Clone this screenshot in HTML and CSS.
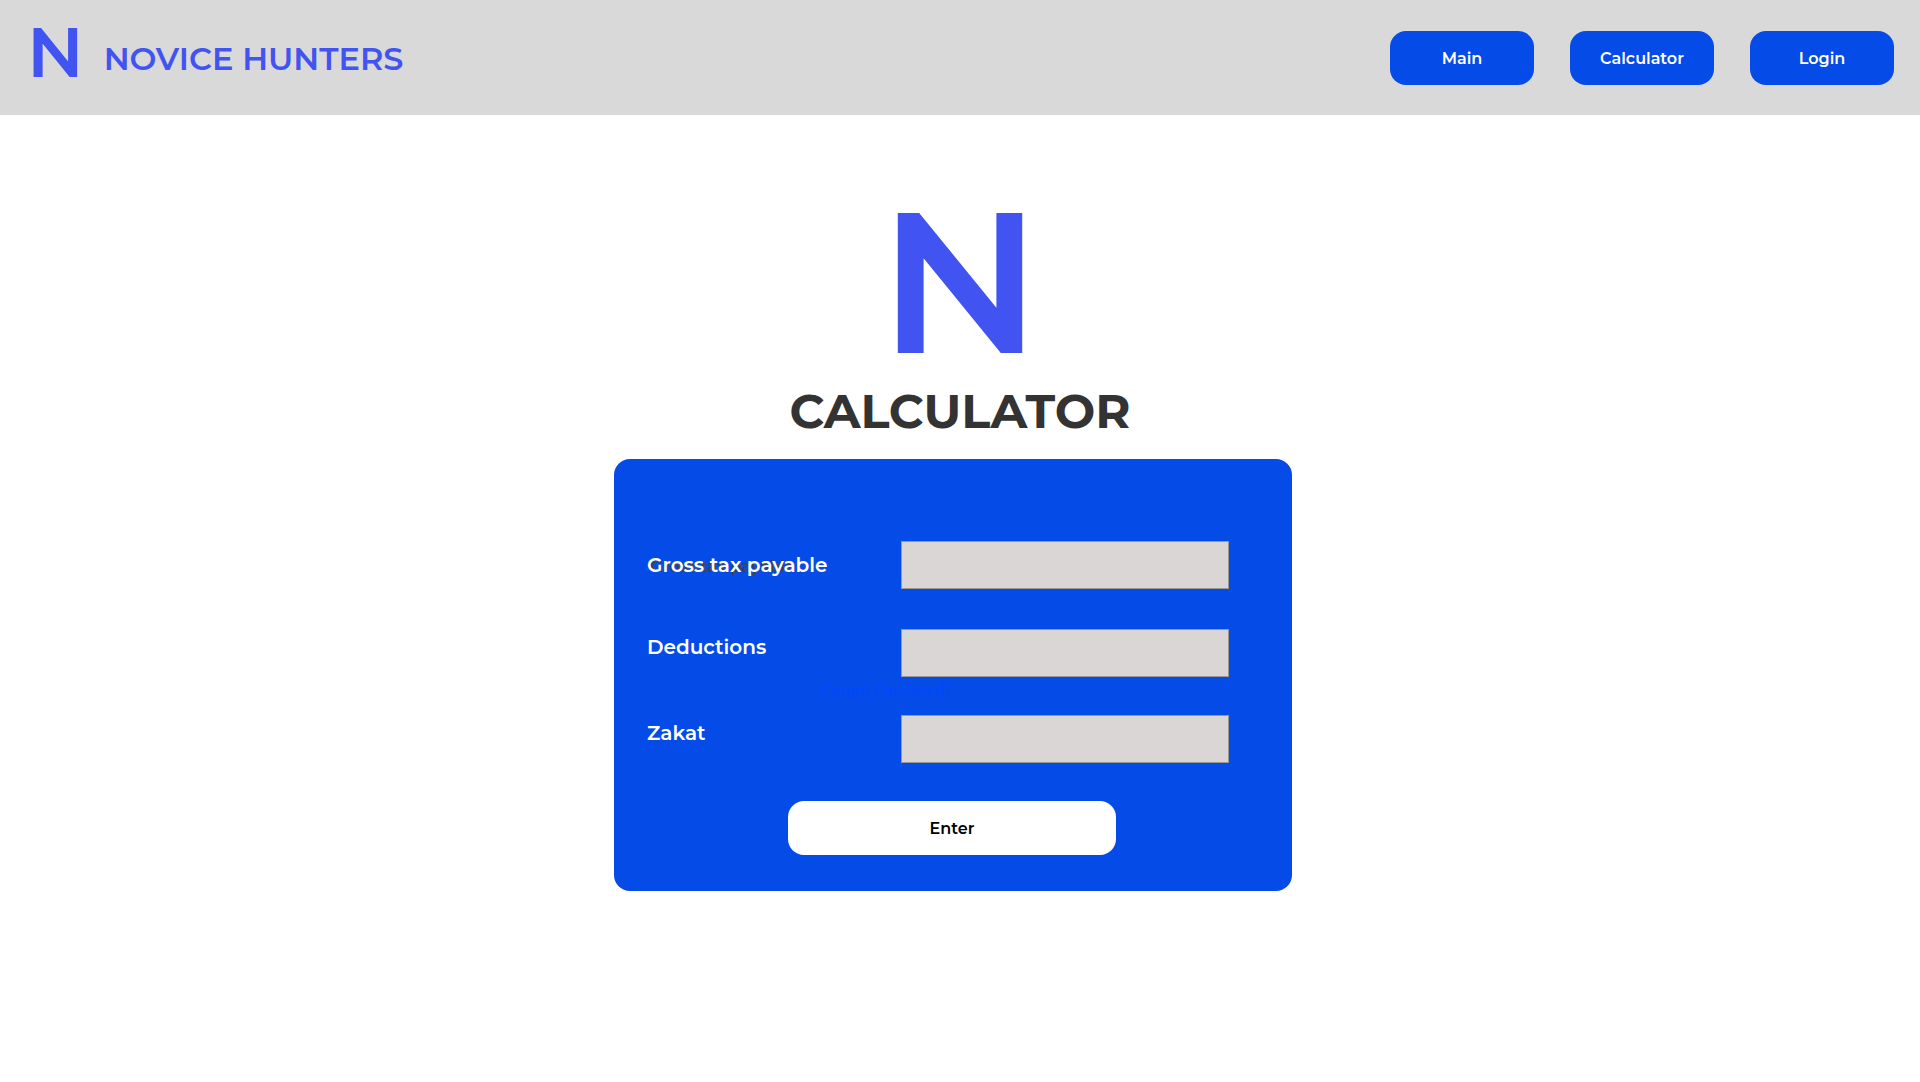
FILE: index.html
```html
<!DOCTYPE html>
<html lang="en">
<head>
<meta charset="utf-8">
<meta name="viewport" content="width=device-width, initial-scale=1">
<title>Novice Hunters</title>
<link rel="stylesheet" href="styles.css">
</head>
<body>
<header class="topbar">
  <a class="brand" href="#">
    <span class="brand-mark">N</span>
    <span class="brand-name">NOVICE HUNTERS</span>
  </a>
  <nav class="nav">
    <a class="pill" href="#">Main</a>
    <a class="pill" href="#">Calculator</a>
    <a class="pill" href="#">Login</a>
  </nav>
</header>
<main class="page">
  <div class="logo">N</div>
  <h1 class="title">CALCULATOR</h1>
  <form class="card">
    <div class="field field-first">
      <div class="label-box">
        <span class="label-ghost" aria-hidden="true">Gross tax payable</span>
        <label class="label" for="gross">Gross tax payable</label>
      </div>
      <input class="input" id="gross" type="text">
    </div>
    <div class="field field-raised">
      <label class="label" for="deductions">Deductions</label>
      <input class="input" id="deductions" type="text">
      <a class="forgot" href="#">Forgot Password?</a>
    </div>
    <div class="field field-raised">
      <label class="label" for="zakat">Zakat</label>
      <input class="input" id="zakat" type="text">
    </div>
    <button class="enter" type="button">Enter</button>
  </form>
</main>
</body>
</html>
```

FILE: styles.css
```css
* { box-sizing: border-box; }

body {
  margin: 0;
  background: #fff;
  font-family: Montserrat, Inter, "Open Sans", sans-serif;
}

a { text-decoration: none; }

.topbar {
  display: flex;
  justify-content: space-between;
  align-items: flex-start;
  padding: 31px 26px 28px 27px;
  background: #d9d9d9;
}

.brand {
  display: flex;
  align-items: flex-start;
  gap: 20px;
  color: #4154f1;
}

.brand-mark {
  font-size: 70px;
  font-weight: 600;
  line-height: 42px;
}

.brand-name {
  font-size: 32px;
  font-weight: 600;
  line-height: 56px;
}

.nav {
  display: flex;
  gap: 36px;
}

.pill {
  display: flex;
  align-items: center;
  justify-content: center;
  width: 144px;
  height: 54px;
  border-radius: 16px;
  background: #054be8;
  color: #fff;
  font-size: 16px;
  font-weight: 600;
}

.page {
  display: flex;
  flex-direction: column;
  align-items: center;
  padding: 98px 16px 64px;
}

.logo {
  color: #4154f1;
  font-size: 200px;
  font-weight: 600;
  line-height: 136px;
}

.title {
  margin: 32px 0 18px;
  color: #333;
  font-size: 48px;
  font-weight: 700;
  line-height: 60px;
}

.card {
  display: flex;
  flex-direction: column;
  width: 100%;
  max-width: 678px;
  margin-right: 14px;
  padding: 82px 63px 36px 33px;
  border-radius: 16px;
  background: #054be8;
}

.field {
  position: relative;
  display: flex;
  justify-content: space-between;
  align-items: center;
  margin-bottom: 38px;
}

.field-first { margin-bottom: 40px; }
.field-raised { align-items: flex-start; }
.field-raised .label { padding-top: 6px; }

.label-box { position: relative; }

.label {
  position: relative;
  color: #fff;
  font-size: 20px;
  font-weight: 600;
  line-height: 24px;
}

.label-ghost {
  position: absolute;
  left: 4px;
  top: 2px;
  color: #444;
  font-size: 16px;
  font-weight: 600;
  line-height: 24px;
  white-space: nowrap;
}

.input {
  width: 328px;
  height: 48px;
  padding: 0 12px;
  border: 1px solid #999;
  border-radius: 0;
  background: #dad6d5;
  font: inherit;
}

.forgot {
  position: absolute;
  left: 176px;
  top: 51px;
  color: #0047ff;
  font-family: Nunito, "Open Sans", sans-serif;
  font-size: 16px;
  line-height: 20px;
}

.enter {
  width: 328px;
  height: 54px;
  margin-left: 141px;
  border: 0;
  border-radius: 16px;
  background: #fff;
  color: #000;
  font: inherit;
  font-size: 16px;
  font-weight: 600;
}
```
